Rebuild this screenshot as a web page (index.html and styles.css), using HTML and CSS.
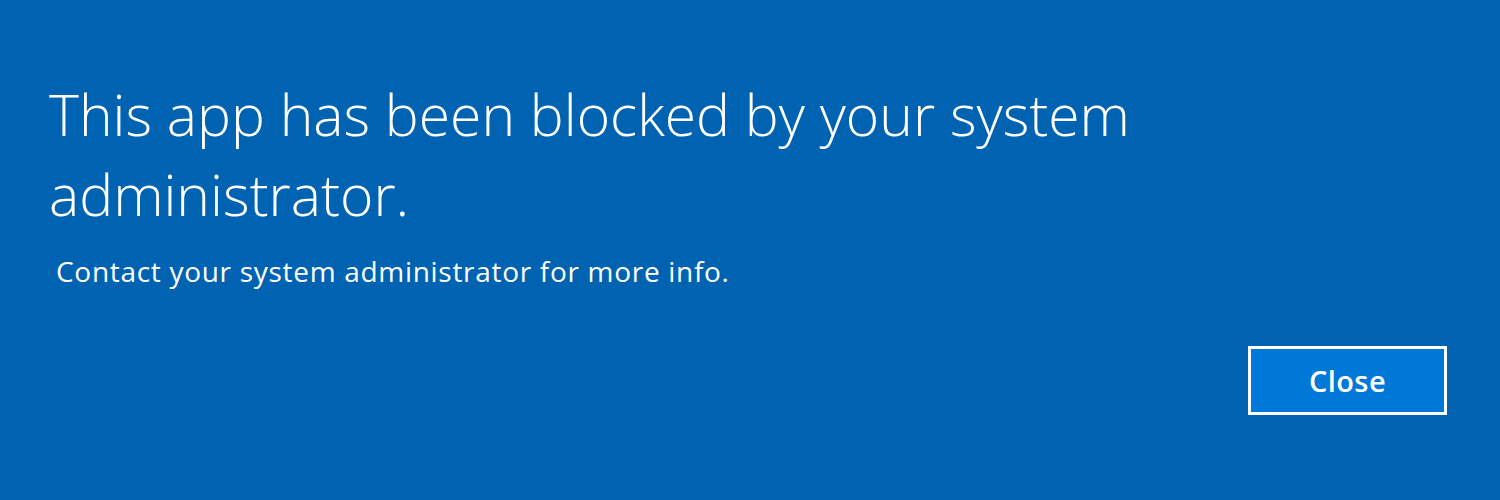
FILE: index.html
```html
<!DOCTYPE html>
<html>
<head>
<meta charset="utf-8">
<link rel="stylesheet" href="styles.css">
</head>
<body>
<div class="dialog">
  <h1 class="title">This app has been blocked by your system administrator.</h1>
  <p class="message">Contact your system administrator for more info.</p>
  <div class="actions">
    <button class="close-btn">Close</button>
  </div>
</div>
</body>
</html>
```
FILE: styles.css
```css
html, body {
  margin: 0;
  padding: 0;
  width: 1500px;
  height: 500px;
  background: #0063b1;
  overflow: hidden;
}
.dialog {
  display: flex;
  flex-direction: column;
  padding: 74px 0 0 49px;
  font-family: "Open Sans", "Noto Sans", sans-serif;
  color: #ffffff;
}
.title {
  margin: 0;
  width: 1120px;
  font-size: 57px;
  font-weight: 300;
  line-height: 80px;
  letter-spacing: 0;
}
.message {
  margin: 19px 0 0 7px;
  font-size: 28px;
  font-weight: 400;
  line-height: 36px;
  letter-spacing: 0.7px;
}
.actions {
  display: flex;
  justify-content: flex-end;
  padding-right: 53px;
  margin-top: 57px;
}
.close-btn {
  width: 199px;
  height: 69px;
  background: #0078d7;
  border: 3px solid #ffffff;
  color: #ffffff;
  font-family: "Open Sans", "Noto Sans", sans-serif;
  font-size: 29px;
  font-weight: 600;
  letter-spacing: 0.4px;
  padding: 0;
}
```
